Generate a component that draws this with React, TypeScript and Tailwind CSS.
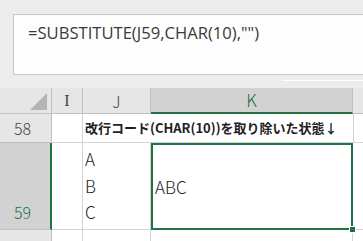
import React from "react";

export default function App() {
  return (
    <div className="w-[363px] h-[241px] overflow-hidden bg-[#ececec] font-['Noto_Sans_CJK_JP',sans-serif]">
      {/* Formula bar */}
      <div className="h-[75px] pt-[14px] pl-[13px]">
        <div className="h-[61px] w-[400px] border border-[#c6c6c6] bg-[#fdfdfd] pl-[14px] pt-[5px]">
          <span className="font-['Open_Sans',sans-serif] text-[16.6px] text-[#3a3a3a]">
            =SUBSTITUTE(J59,CHAR(10),"")
          </span>
        </div>
      </div>

      {/* gap strip */}
      <div className="h-[13px] flex items-start pt-[5px] pl-[282px]">
        <div className="h-px w-full bg-white" />
      </div>

      {/* Grid */}
      <div className="grid grid-cols-[52px_31px_68px_202px_1fr] grid-rows-[26px_29px_87px_1fr] h-[153px]">
        {/* header row */}
        <div className="bg-[#e6e6e6] border-r border-b border-[#c0c0c0] flex items-end justify-end pr-[4px] pb-[3px]">
          <div className="w-0 h-0 border-l-[17px] border-l-transparent border-b-[17px] border-b-[#b4b4b4]" />
        </div>
        <div className="bg-[#e6e6e6] border-r border-b border-[#c0c0c0] flex items-center justify-center text-[16px] text-[#444] font-['Liberation_Serif',serif]">
          I
        </div>
        <div className="bg-[#e6e6e6] border-r border-b border-[#c0c0c0] flex items-center justify-center text-[16px] text-[#444] font-light">
          J
        </div>
        <div className="bg-[#d2d2d2] border-r border-[#c0c0c0] border-b-2 border-b-[#217346] flex items-center justify-center text-[17px] text-[#217346] font-light">
          K
        </div>
        <div className="bg-[#e6e6e6] border-b border-[#c0c0c0]" />

        {/* row 58 */}
        <div className="bg-[#e6e6e6] border-r border-b border-[#c0c0c0] flex items-center pl-[14px] text-[16px] text-[#444] font-light">
          58
        </div>
        <div className="bg-white border-r border-b border-[#d4d4d4]" />
        <div className="bg-white border-b border-[#d4d4d4] col-span-2 flex items-center pl-[2px] whitespace-nowrap text-[13px] font-bold text-[#222]">
          改行コード(CHAR(10))を取り除いた状態↓
        </div>
        <div className="bg-white border-b border-l border-[#d4d4d4]" />

        {/* row 59 */}
        <div className="bg-[#d2d2d2] border-r-2 border-r-[#217346] border-b border-b-[#c0c0c0] flex items-end pl-[14px] pb-[5px] text-[16px] text-[#217346] font-light">
          59
        </div>
        <div className="bg-white border-r border-b border-[#d4d4d4]" />
        <div className="bg-white border-r border-b border-[#d4d4d4] flex flex-col justify-center pl-[2px] text-[17px] leading-[26.5px] text-[#222] font-light">
          <span>A</span>
          <span>B</span>
          <span>C</span>
        </div>
        <div className="relative bg-white border-2 border-[#217346] flex items-center pl-[2px] text-[17px] text-[#222] font-light">
          ABC
          <div className="absolute right-[-5px] bottom-[-5px] w-[7px] h-[7px] bg-[#217346] border border-white" />
        </div>
        <div className="bg-white border-b border-[#d4d4d4]" />

        {/* row 60 */}
        <div className="bg-[#e6e6e6] border-r border-[#c0c0c0]" />
        <div className="bg-white border-r border-[#d4d4d4]" />
        <div className="bg-white border-r border-[#d4d4d4]" />
        <div className="bg-white border-r border-[#d4d4d4]" />
        <div className="bg-white" />
      </div>
    </div>
  );
}
